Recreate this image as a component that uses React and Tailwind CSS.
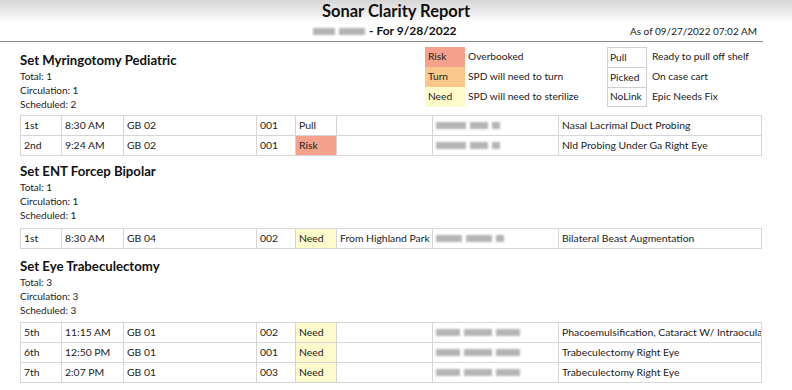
import React from 'react';

const COLS = [41, 62, 133, 39, 41, 96, 126, 203];

const STATUS = {
  Pull: 'bg-white',
  Risk: 'bg-[#f4a28c]',
  Turn: 'bg-[#f9c98b]',
  Need: 'bg-[#fdfacb]',
};

const sections = [
  {
    name: 'Set Myringotomy Pediatric',
    total: 1,
    circ: 1,
    sched: 2,
    legend: true,
    top: 'pt-[9px]',
    gap: 'mt-[4px]',
    rows: [
      ['1st', '8:30 AM', 'GB 02', '001', 'Pull', '', [30, 18, 8], 'Nasal Lacrimal Duct Probing'],
      ['2nd', '9:24 AM', 'GB 02', '001', 'Risk', '', [30, 18, 8], 'Nld Probing Under Ga Right Eye'],
    ],
  },
  {
    name: 'Set ENT Forcep Bipolar',
    total: 1,
    circ: 1,
    sched: 1,
    top: 'pt-[6px]',
    gap: 'mt-[6px]',
    rows: [
      ['1st', '8:30 AM', 'GB 04', '002', 'Need', 'From Highland Park', [26, 26, 8], 'Bilateral Beast Augmentation'],
    ],
  },
  {
    name: 'Set Eye Trabeculectomy',
    total: 3,
    circ: 3,
    sched: 3,
    top: 'pt-[8px]',
    gap: 'mt-[5px]',
    rows: [
      ['5th', '11:15 AM', 'GB 01', '002', 'Need', '', [24, 28, 24], 'Phacoemulsification, Cataract W/ Intraocular Lens'],
      ['6th', '12:50 PM', 'GB 01', '001', 'Need', '', [24, 28, 24], 'Trabeculectomy Right Eye'],
      ['7th', '2:07 PM', 'GB 01', '003', 'Need', '', [24, 28, 24], 'Trabeculectomy Right Eye'],
    ],
  },
];

function Blur({ parts }) {
  return (
    <div className="flex items-center gap-[4px]">
      {parts.map((w, i) => (
        <div key={i} className="h-[7px] bg-[#b4b4b4] blur-[1.3px]" style={{ width: w }} />
      ))}
    </div>
  );
}

function Legend() {
  const left = [
    ['Risk', 'Overbooked'],
    ['Turn', 'SPD will need to turn'],
    ['Need', 'SPD will need to sterilize'],
  ];
  const right = [
    ['Pull', 'Ready to pull off shelf'],
    ['Picked', 'On case cart'],
    ['NoLink', 'Epic Needs Fix'],
  ];
  return (
    <div className="flex pt-[5px] text-[10.2px] text-[#222]">
      <div className="ml-[425px] w-[182px]">
        {left.map(([k, v]) => (
          <div key={k} className="flex h-[20px] items-center">
            <div className={`flex h-full w-[40px] items-center pl-[3px] ${STATUS[k]}`}>{k}</div>
            <div className="pl-[3px]">{v}</div>
          </div>
        ))}
      </div>
      <div>
        {right.map(([k, v], i) => (
          <div key={k} className="flex h-[20px] items-center">
            <div className={`flex h-full w-[40px] items-center border-x border-t border-[#cfcfcf] pl-[2px] ${i === 2 ? 'border-b' : ''}`}>{k}</div>
            <div className="pl-[5px]">{v}</div>
          </div>
        ))}
      </div>
    </div>
  );
}

function Section({ s }) {
  return (
    <div className={s.top}>
      <div className="relative">
        <div className="pl-[20px]">
          <h2 className="text-[13.2px] font-bold leading-[18px] text-[#111]">{s.name}</h2>
          <div className="text-[10px] leading-[14px] text-[#222]">
            <div>Total: {s.total}</div>
            <div>Circulation: {s.circ}</div>
            <div>Scheduled: {s.sched}</div>
          </div>
        </div>
        {s.legend && (
          <div className="absolute left-0 top-[-9px]">
            <Legend />
          </div>
        )}
      </div>
      <table className={`ml-[20px] ${s.gap} table-fixed border-collapse text-[10.4px] text-[#222]`} style={{ width: 741 }}>
        <colgroup>
          {COLS.map((w, i) => (
            <col key={i} style={{ width: w }} />
          ))}
        </colgroup>
        <tbody>
          {s.rows.map((r, i) => (
            <tr key={i} className="h-[20px]">
              {r.map((c, j) => (
                <td
                  key={j}
                  className={`overflow-hidden whitespace-nowrap border-[1.5px] border-[#d6d6d6] py-0 pl-[3px] leading-[17px] ${j === 4 ? STATUS[c] : ''}`}
                >
                  {j === 6 ? <Blur parts={c} /> : c}
                </td>
              ))}
            </tr>
          ))}
        </tbody>
      </table>
    </div>
  );
}

export default function App() {
  return (
    <div className="h-[390px] w-[792px] overflow-hidden bg-white font-['Lato',sans-serif]">
      <div className="bg-linear-to-b from-[#d6d6d6] to-white to-[55%]">
        <div className="pt-[1px] text-center text-[16.5px] font-bold leading-[20px] text-[#111]">Sonar Clarity Report</div>
        <div className="flex h-[20px] items-center">
          <div className="flex items-center pl-[313px]">
            <Blur parts={[22, 26]} />
            <span className="pl-[4px] text-[12px] font-bold text-[#111]">- For 9/28/2022</span>
          </div>
          <div className="ml-auto pr-[35px] text-[10px] text-[#222]">As of 09/27/2022 07:02 AM</div>
        </div>
      </div>
      <div className="w-[763px] border-b border-[#8a8a8a]" />
      {sections.map((s, i) => (
        <Section key={i} s={s} />
      ))}
    </div>
  );
}
